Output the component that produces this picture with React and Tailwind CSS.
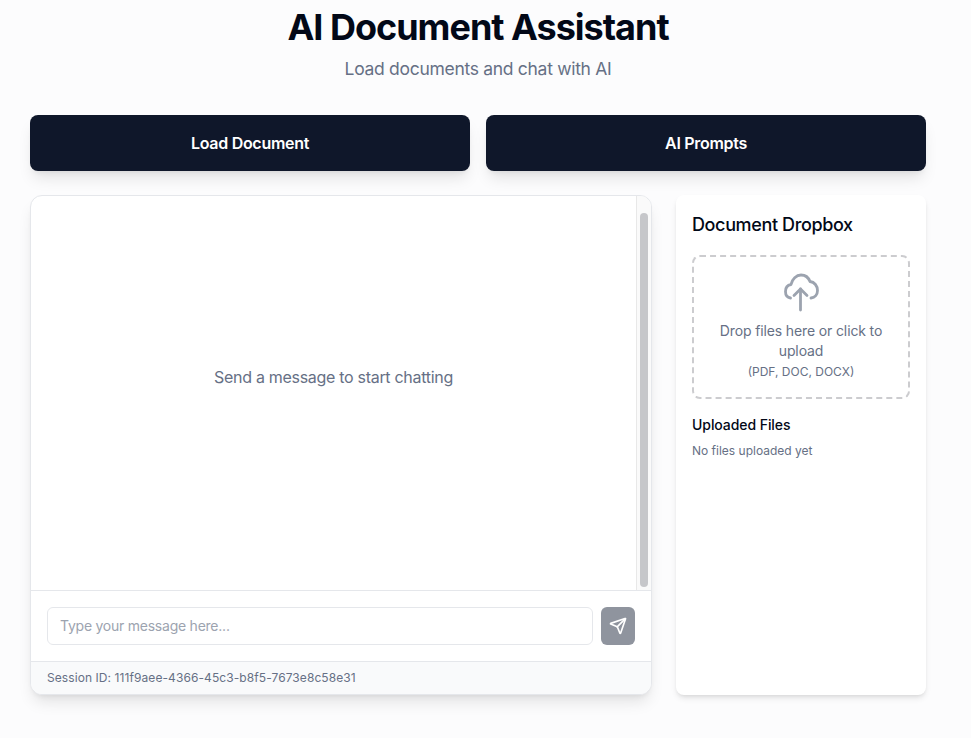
import { Send } from "lucide-react";

function UploadIcon() {
  return (
    <svg
      viewBox="0 0 52 52"
      className="h-[52px] w-[52px] text-[#9ca3af]"
      fill="none"
      stroke="currentColor"
      strokeWidth="2.8"
      strokeLinecap="round"
      strokeLinejoin="round"
    >
      <path d="M15.5 33C12 32.5 10.5 29.5 10.5 26.5C10.5 22.5 13 20 16 19.5C17 14 21.5 10 26 10C30.5 10 33.5 12.5 35 16.5C39.5 17 42.5 21 42.5 25.5C42.5 29.5 40 32.5 36 33" />
      <path d="M25.5 24V45" />
      <path d="M19 30.5L25.5 24L32 30.5" />
    </svg>
  );
}

export default function App() {
  return (
    <div className="min-h-[738px] bg-[#fcfcfd] pr-[15px] font-['Inter',sans-serif]">
      <div className="mx-auto w-[896px]">
        {/* Header */}
        <div className="text-center">
          <h1 className="pt-[7px] text-4xl font-bold leading-10 tracking-[-1px] text-[#020817]">
            AI Document Assistant
          </h1>
          <p className="mt-2 text-[17.5px] leading-7 tracking-[-0.3px] text-[#667085]">
            Load documents and chat with AI
          </p>
        </div>

        {/* Actions */}
        <div className="mt-8 grid grid-cols-2 gap-4">
          <button className="h-14 rounded-lg bg-[#0f172a] text-base font-semibold tracking-[-0.3px] text-white shadow-lg">
            Load Document
          </button>
          <button className="h-14 rounded-lg bg-[#0f172a] text-base font-semibold tracking-[-0.3px] text-white shadow-lg">
            AI Prompts
          </button>
        </div>

        <div className="mt-6 flex h-[500px] gap-6">
          {/* Chat */}
          <div className="flex w-[622px] flex-col overflow-hidden rounded-xl border border-[#e5e7eb] bg-white shadow-lg">
            <div className="flex min-h-0 flex-1">
              <div className="flex flex-1 items-center justify-center pb-8 text-base tracking-[-0.3px] text-[#667085]">
                Send a message to start chatting
              </div>
              <div className="w-[15px] border-l border-[#e8e8e8] bg-[#fafafa] px-[3px] pb-[3px] pt-[17px]">
                <div className="h-full rounded-full bg-[#c6c7ca]"></div>
              </div>
            </div>
            <div className="flex gap-2 border-t border-[#e5e7eb] p-4">
              <input
                placeholder="Type your message here..."
                className="h-[38px] flex-1 rounded-md border border-[#e5e7eb] bg-white px-3 pb-[2px] text-sm tracking-[-0.24px] text-[#020817] outline-none placeholder:text-[#9ca3af]"
              />
              <button className="flex h-[38px] w-[34px] items-center justify-center rounded-md bg-[#8f949e] text-white">
                <Send size={18} strokeWidth={2.2} />
              </button>
            </div>
            <div className="h-[33px] border-t border-[#e5e7eb] bg-[#f9fafb] px-4 text-xs leading-[31px] tracking-[0.08px] text-[#667085]">
              Session ID: 111f9aee-4366-45c3-b8f5-7673e8c58e31
            </div>
          </div>

          {/* Dropbox */}
          <div className="w-[250px] rounded-lg bg-white p-4 shadow-md">
            <h2 className="text-lg font-medium leading-7 tracking-[-0.37px] text-[#020817]">Document Dropbox</h2>
            <div className="mt-4 flex h-[144px] flex-col items-center rounded-lg border-2 border-dashed border-[#cccccf] px-4 pt-2 text-center">
              <UploadIcon />
              <p className="mt-1 text-sm leading-5 tracking-[-0.13px] text-[#667085]">Drop files here or click to upload</p>
              <p className="mt-[3px] text-xs leading-4 text-[#667085]">(PDF, DOC, DOCX)</p>
            </div>
            <h3 className="mt-4 text-sm font-medium leading-5 tracking-[-0.07px] text-[#020817]">Uploaded Files</h3>
            <p className="mt-2 text-xs leading-4 text-[#667085]">No files uploaded yet</p>
          </div>
        </div>
      </div>
    </div>
  );
}
